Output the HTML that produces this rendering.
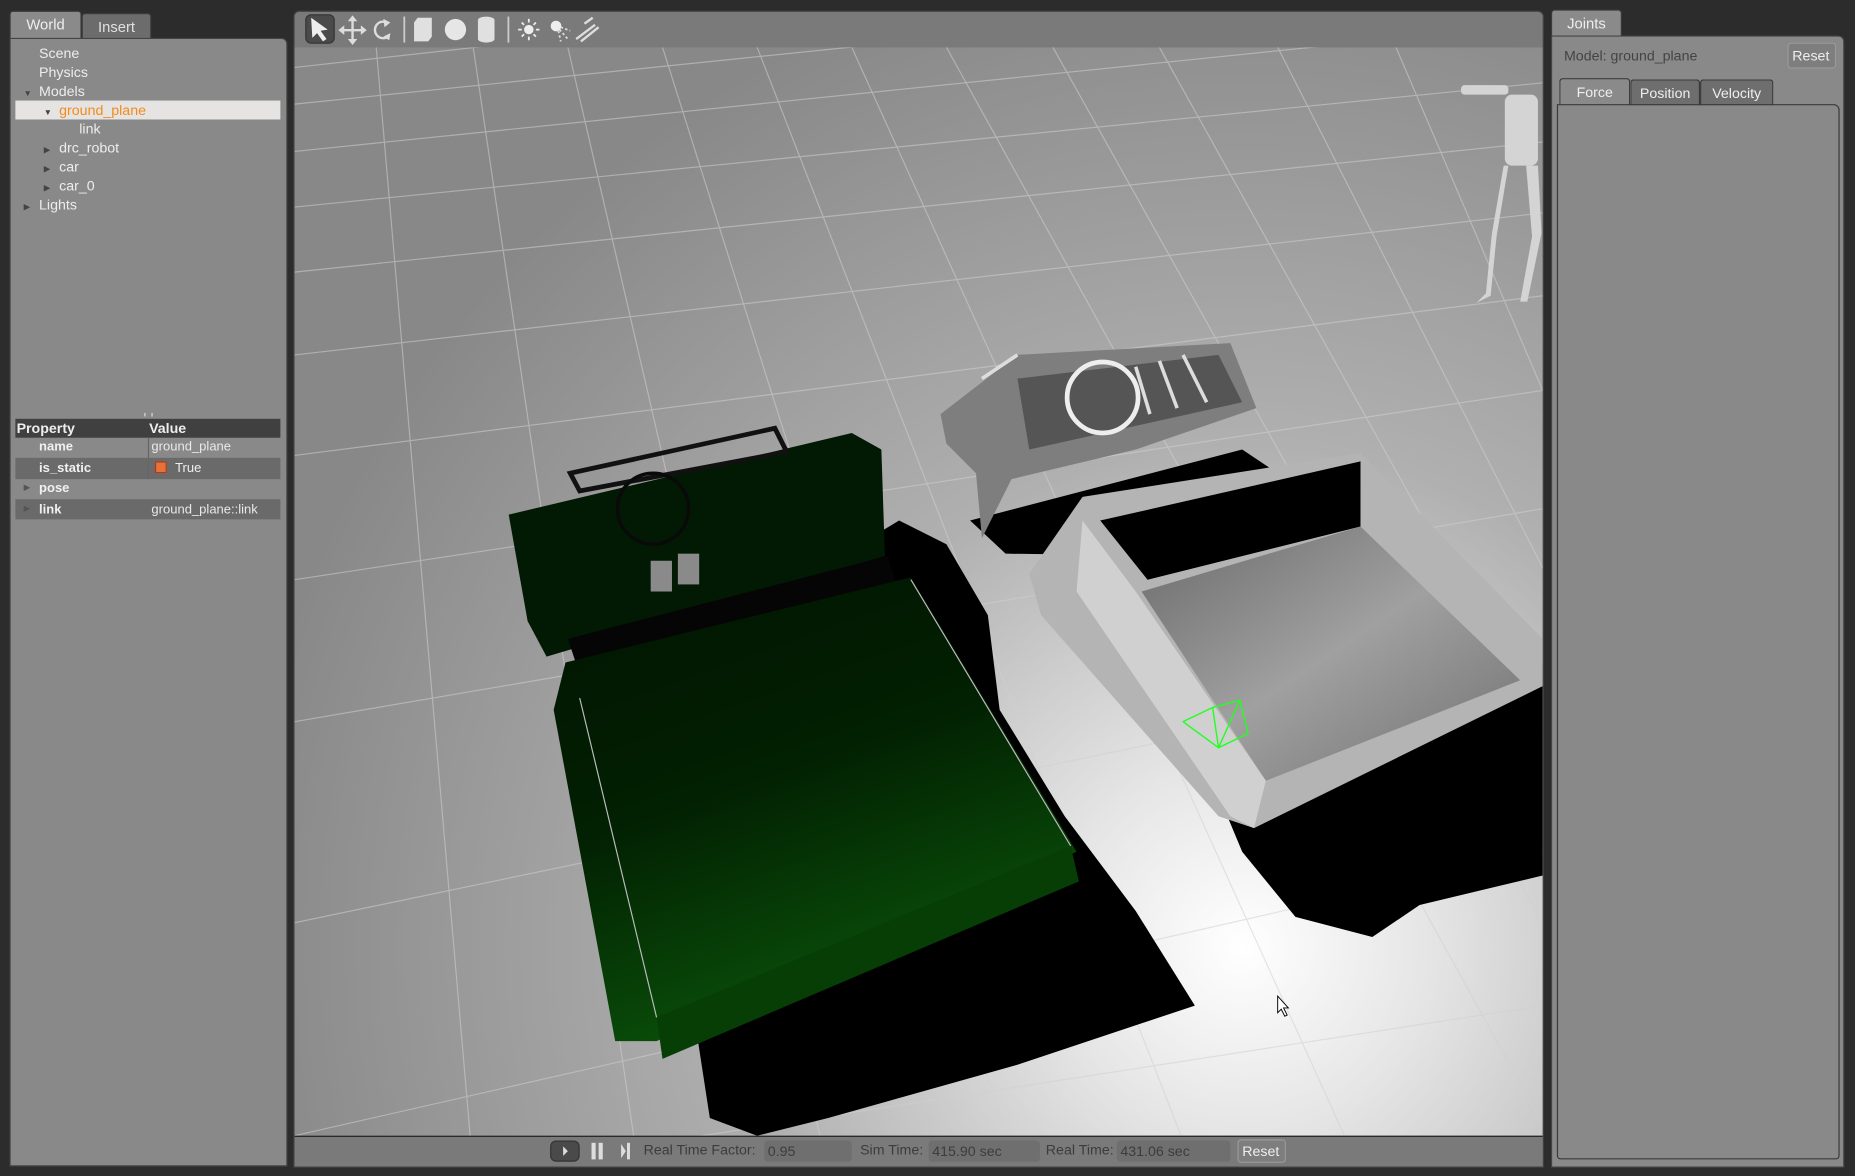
<!DOCTYPE html>
<html><head><meta charset="utf-8"><style>
*{margin:0;padding:0;box-sizing:border-box}
body{width:1855px;height:1176px;background:#2c2c2c;font-family:"Liberation Sans",sans-serif;overflow:hidden;color:#e6e6e6}
#w{position:absolute;left:0;top:0;width:1568px;height:994px;transform:scale(1.18304);transform-origin:0 0}
.abs{position:absolute}
.tab{position:absolute;font-size:12.5px;text-align:center;line-height:22px;border:1px solid #3a3a3a;border-bottom:none;border-radius:3px 3px 0 0}
.tree div{position:absolute;font-size:12px;color:#ededed;white-space:nowrap;line-height:16px}
.tri{font-size:7px;color:#444}
.prop div{position:absolute;font-size:11px;white-space:nowrap;line-height:16px}
.bb{position:absolute;font-size:12px;color:#3c3c3c;top:965px;white-space:nowrap}
.fld{position:absolute;top:964px;height:18px;background:#6f6f6f;border-radius:3px;font-size:12px;color:#3c3c3c;padding:1px 3px;white-space:nowrap;line-height:16px}
</style></head><body><div id="w">
<!-- left panel -->
<div class="tab" style="left:8px;top:9px;width:61px;height:24px;background:#8a8a8a;color:#eee">World</div>
<div class="tab" style="left:69px;top:11px;width:59px;height:22px;background:#6c6c6c;color:#e0e0e0">Insert</div>
<div class="abs" style="left:8px;top:32px;width:235px;height:954px;background:#898989;border-radius:0 5px 0 0;border:1px solid #444"></div>
<div class="abs" style="left:13px;top:85px;width:224px;height:16px;background:#e6e4e2"></div>
<div class="tree">
<div style="left:33px;top:37px">Scene</div>
<div style="left:33px;top:53px">Physics</div>
<div style="left:20px;top:69px"><span class="tri">▼</span></div><div style="left:33px;top:69px">Models</div>
<div style="left:37px;top:85px"><span class="tri">▼</span></div><div style="left:50px;top:85px;color:#f28a1c">ground_plane</div>
<div style="left:67px;top:101px">link</div>
<div style="left:37px;top:117px"><span class="tri">▶</span></div><div style="left:50px;top:117px">drc_robot</div>
<div style="left:37px;top:133px"><span class="tri">▶</span></div><div style="left:50px;top:133px">car</div>
<div style="left:37px;top:149px"><span class="tri">▶</span></div><div style="left:50px;top:149px">car_0</div>
<div style="left:20px;top:165px"><span class="tri">▶</span></div><div style="left:33px;top:165px">Lights</div>
</div>
<div class="abs" style="left:122px;top:349px;width:7px;height:3px;border-left:1px solid #ddd;border-right:1px solid #ddd"></div>
<div class="abs" style="left:13px;top:354px;width:224px;height:16px;background:#404040"></div>
<div class="abs" style="left:13px;top:387px;width:224px;height:18px;background:#6a6a6a"></div>
<div class="abs" style="left:13px;top:422px;width:224px;height:17px;background:#6a6a6a"></div>
<div class="abs" style="left:125px;top:370px;width:1px;height:35px;background:#666"></div>
<div class="prop">
<div style="left:14px;top:354px;font-weight:bold;color:#eee;font-size:12px">Property</div>
<div style="left:126px;top:354px;font-weight:bold;color:#eee;font-size:12px">Value</div>
<div style="left:33px;top:370px;font-weight:bold;color:#f0f0f0">name</div>
<div style="left:128px;top:370px;color:#e8e8e8">ground_plane</div>
<div style="left:33px;top:388px;font-weight:bold;color:#f0f0f0">is_static</div>
<div style="left:131px;top:390px;width:10px;height:10px;background:#e8703a;border:1px solid #a04020"></div>
<div style="left:148px;top:388px;color:#eee">True</div>
<div style="left:20px;top:405px;font-size:7px;color:#555">▶</div>
<div style="left:33px;top:405px;font-weight:bold;color:#f0f0f0">pose</div>
<div style="left:20px;top:423px;font-size:7px;color:#555">▶</div>
<div style="left:33px;top:423px;font-weight:bold;color:#f0f0f0">link</div>
<div style="left:128px;top:423px;color:#e8e8e8">ground_plane::link</div>
</div>

<!-- viewport frame + toolbar -->
<div class="abs" style="left:248px;top:9px;width:1057px;height:978px;background:#7a7a7a;border-radius:5px 5px 0 0;border:1px solid #444"></div>
<div class="abs" style="left:258px;top:12px;width:25px;height:25px;background:#4a4a4a;border-radius:5px;border:1px solid #333"></div>
<svg class="abs" style="left:258px;top:10px" width="260" height="30" viewBox="0 0 260 30">
<path d="M5 5 L19 15 L13 16 L18 23 L15 25 L10 18 L6 22 Z" fill="#eee"/>
<path d="M40 6 V25 M31 15.5 H49" stroke="#ddd" stroke-width="2" fill="none"/>
<path d="M40 3 l-4 5 h8 z M40 28 l-4 -5 h8 z M28 15.5 l5 -4 v8 z M52 15.5 l-5 -4 v8 z" fill="#ddd"/>
<path d="M69 9 A7 7 0 1 0 70 21" stroke="#ddd" stroke-width="2" fill="none"/><path d="M66 6 l6 3 l-5 4 z M71 24 l-5 -3 l6-3z" fill="#ddd"/>
<rect x="83" y="4" width="1.5" height="22" fill="#ccc"/>
<path d="M92 9 l3-4 h12 v16 l-3 4 h-12 z" fill="#e0e0e0"/>
<circle cx="127" cy="15" r="9" fill="#e6e6e6"/>
<path d="M146 7 a7 3 0 0 1 14 0 v16 a7 3 0 0 1 -14 0z" fill="#e0e0e0"/>
<rect x="171" y="4" width="1.5" height="22" fill="#ccc"/>
<circle cx="189" cy="15" r="4" fill="#eee"/>
<path d="M189 6v3M189 21v3M180 15h3M195 15h3M183 9l2 2M193 19l2 2M195 9l-2 2M183 21l2-2" stroke="#eee" stroke-width="1.5"/>
<circle cx="212" cy="12" r="4.5" fill="#eee"/><path d="M215 15 l7 8 M216 13 l8 3 M214 16 l2 9" stroke="#ddd" stroke-width="1.5" stroke-dasharray="2 2"/>
<path d="M229 23 l16-12 M233 25 l15-12 M236 10 l7-5" stroke="#ddd" stroke-width="2"/>
</svg>

<!-- 3D scene -->
<svg class="abs" style="left:0;top:0" width="1568" height="994" viewBox="0 0 1568 994">
<defs>
<clipPath id="vc"><rect x="249" y="40" width="1055" height="920"/></clipPath>
<radialGradient id="bg" cx="1050" cy="800" r="850" gradientUnits="userSpaceOnUse">
<stop offset="0" stop-color="#ffffff"/><stop offset="0.18" stop-color="#e6e6e6"/><stop offset="0.5" stop-color="#b0b0b0"/><stop offset="1" stop-color="#888"/>
</radialGradient>
<linearGradient id="gr" x1="0" y1="0" x2="0.4" y2="1"><stop offset="0" stop-color="#011401"/><stop offset="0.5" stop-color="#022002"/><stop offset="1" stop-color="#0a520a"/></linearGradient>
<linearGradient id="tb" x1="0" y1="0" x2="1" y2="1"><stop offset="0" stop-color="#6a6a6a"/><stop offset="0.5" stop-color="#a0a0a0"/><stop offset="1" stop-color="#707070"/></linearGradient>
</defs>
<g clip-path="url(#vc)">
<rect x="249" y="40" width="1055" height="920" fill="url(#bg)"/>
<g stroke="#d0d0d0" stroke-width="1" opacity="0.55" fill="none">
<path d="M249 57 L1304 -60 M249 88 L1304 -20 M249 128 L1304 20 M249 175 L1304 70 M249 230 L1304 120 M249 300 L1304 180 M249 385 L1304 250 M249 490 L1304 330 M249 610 L1304 430 M249 780 L1304 560 M249 960 L1304 720 M400 990 L1304 850"/>
<path d="M318 40 L400 990 M400 40 L540 990 M480 40 L700 990 M560 40 L860 990 M640 40 L1010 990 M720 40 L1150 990 M800 40 L1304 950 M890 40 L1304 780 M980 40 L1304 620 M1080 40 L1304 480 M1180 40 L1304 330"/>
</g>
<polygon points="560,560 760,440 800,460 835,520 845,600 900,690 960,770 1010,850 860,900 700,945 640,960 600,945 590,880 560,870" fill="#000"/>
<polygon points="1000,600 1304,560 1304,740 1200,765 1160,792 1095,775 1050,720" fill="#000"/>
<polygon points="820,440 1050,380 1110,420 1000,470 850,468" fill="#000"/>
<!-- green car -->
<polygon points="430,435 720,366 745,380 748,470 462,555 446,525" fill="#021a03"/>
<path d="M482 400 L655 362 L665 382 L490 415 Z" fill="none" stroke="#111" stroke-width="4"/>
<circle cx="552" cy="430" r="30" fill="none" stroke="#0a0a0a" stroke-width="3"/>
<rect x="550" y="474" width="18" height="26" fill="#8a8a8a"/><rect x="573" y="468" width="18" height="26" fill="#8a8a8a"/>
<polygon points="480,540 750,470 760,500 490,570" fill="#050505"/>
<polygon points="468,600 478,560 770,488 910,720 555,880 520,880" fill="url(#gr)"/>
<polygon points="555,860 905,715 912,745 560,895" fill="#063e06"/>
<path d="M490 590 L555 860 M770 490 L905 715" stroke="#bbb" stroke-width="1"/>
<!-- white truck front -->
<polygon points="795,350 860,300 1040,290 1062,345 960,380 855,405 830,455 825,400 800,375" fill="#7e7e7e"/>
<polygon points="860,320 1030,300 1050,340 870,380" fill="#555"/>
<path d="M830 320 L860 300 M1000 300 L1020 340 M980 305 L995 345 M960 310 L972 350" stroke="#ddd" stroke-width="3"/>
<circle cx="932" cy="336" r="30" fill="none" stroke="#eee" stroke-width="4"/>
<!-- truck bed -->
<polygon points="870,485 915,420 1150,383 1304,540 1304,580 1060,700 1030,690 880,520" fill="#b4b4b4"/>
<polygon points="930,440 1150,390 1150,445 970,490" fill="#000"/>
<polygon points="965,500 1150,445 1285,575 1070,660" fill="url(#tb)"/>
<polygon points="915,440 960,500 1070,660 1060,700 1040,690 910,500" fill="#d0d0d0"/>
<path d="M1025 598 L1048 592 L1055 620 L1030 632 Z M1000 610 L1025 598 M1030 632 L1000 610 M1048 592 L1030 632" stroke="#2f2" stroke-width="1.2" fill="none"/>
<!-- robot -->
<g fill="#d4d4d4"><rect x="1235" y="72" width="40" height="8" rx="3"/><rect x="1272" y="80" width="28" height="60" rx="6"/><path d="M1275 140 l-10 60 l-5 50 l-12 6 l8 -8 l5 -50 l10 -58z"/><path d="M1290 140 l5 60 l-10 55 l6 0 l12 -58 l-3 -57z"/></g>
<path d="M1080 842 l0 14 l3 -3 l3 6 l2 -1 l-3 -6 l4 0 z" fill="#fff" stroke="#000" stroke-width="0.8"/>
</g>
</svg>

<!-- bottom bar -->
<div class="abs" style="left:249px;top:960px;width:1055px;height:26px;background:#7a7a7a;border-top:1px solid #222"></div>
<div class="abs" style="left:465px;top:964px;width:25px;height:18px;background:#4a4a4a;border-radius:5px;border:1px solid #333"></div>
<svg class="abs" style="left:465px;top:963px" width="80" height="20"><path d="M11 6 l4 4 l-4 4z" fill="#ddd"/><rect x="35" y="3" width="3.5" height="14" fill="#ddd"/><rect x="41" y="3" width="3.5" height="14" fill="#ddd"/><path d="M60 4 l4 6 l-4 6z" fill="#ddd"/><rect x="65" y="3" width="2.5" height="14" fill="#ddd"/></svg>
<div class="bb" style="left:544px">Real Time Factor:</div>
<div class="fld" style="left:646px;width:74px">0.95</div>
<div class="bb" style="left:727px">Sim Time:</div>
<div class="fld" style="left:785px;width:94px">415.90 sec</div>
<div class="bb" style="left:884px">Real Time:</div>
<div class="fld" style="left:944px;width:96px">431.06 sec</div>
<div class="abs" style="left:1046px;top:963px;width:41px;height:20px;background:#7e7e7e;border:1px solid #999;border-radius:3px;font-size:12px;color:#eee;padding:2px 3px;line-height:15px">Reset</div>

<!-- right panel -->
<div class="tab" style="left:1311px;top:8px;width:60px;height:23px;background:#8a8a8a;color:#eee">Joints</div>
<div class="abs" style="left:1311px;top:30px;width:248px;height:957px;background:#898989;border-radius:0 5px 0 0;border:1px solid #444"></div>
<div class="abs" style="left:1322px;top:40px;font-size:12px;color:#444">Model: ground_plane</div>
<div class="abs" style="left:1511px;top:36px;width:41px;height:22px;background:#7e7e7e;border:1px solid #999;border-radius:3px;font-size:12px;color:#eee;padding:3px 3px;line-height:15px">Reset</div>
<div class="tab" style="left:1318px;top:66px;width:60px;height:23px;background:#8a8a8a;color:#eee;font-size:12px">Force</div>
<div class="tab" style="left:1378px;top:67px;width:59px;height:22px;background:#6e6e6e;color:#eee;font-size:12px">Position</div>
<div class="tab" style="left:1437px;top:67px;width:62px;height:22px;background:#6e6e6e;color:#eee;font-size:12px">Velocity</div>
<div class="abs" style="left:1316px;top:88px;width:239px;height:892px;border:1px solid #3a3a3a;border-radius:0 5px 3px 3px"></div>
</div></body></html>
